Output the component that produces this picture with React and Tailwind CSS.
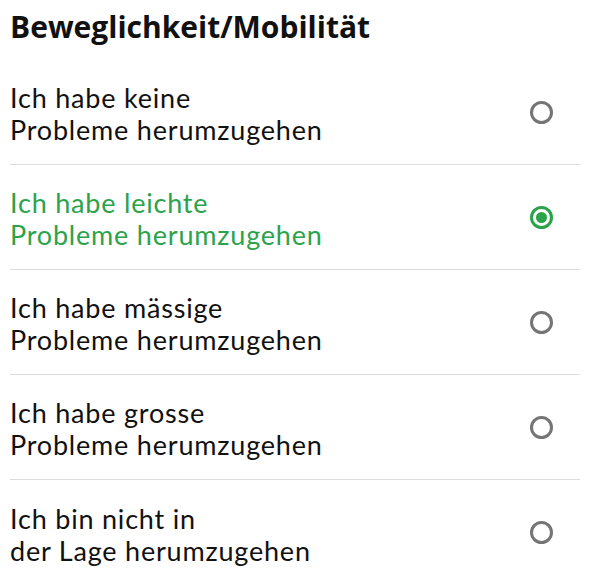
import React, { useState } from 'react';

const options = [
  ['Ich habe keine', 'Probleme herumzugehen'],
  ['Ich habe leichte', 'Probleme herumzugehen'],
  ['Ich habe mässige', 'Probleme herumzugehen'],
  ['Ich habe grosse', 'Probleme herumzugehen'],
  ['Ich bin nicht in', 'der Lage herumzugehen'],
];

function Radio({ checked }) {
  if (checked) {
    return (
      <div className="w-[23px] h-[23px] rounded-full border-[3px] border-[#2ba34a] flex items-center justify-center">
        <div className="w-[11px] h-[11px] rounded-full bg-[#2ba34a]"></div>
      </div>
    );
  }
  return <div className="w-[23px] h-[23px] rounded-full border-[3px] border-[#757575]"></div>;
}

export default function App() {
  const [selected, setSelected] = useState(1);

  return (
    <div className="bg-white w-[593px] h-[582px] overflow-hidden pl-[10px] pr-[13px] font-[Lato,sans-serif]">
      <h1 className="font-['Open_Sans',sans-serif] text-[30px] font-bold text-[#111] leading-none pt-[12px] pb-[18px]">
        Beweglichkeit/Mobilität
      </h1>
      <div>
        {options.map((lines, i) => (
          <div
            key={i}
            onClick={() => setSelected(i)}
            className={`flex items-center justify-between h-[105px] ${i < options.length - 1 ? 'border-b border-[#dcdcdc]' : ''}`}
          >
            <p className={`mt-[4px] text-[27px] font-normal tracking-[0.8px] leading-[32px] ${selected === i ? 'text-[#2ba34a]' : 'text-[#111]'}`}>
              {lines[0]}
              <br />
              {lines[1]}
            </p>
            <div className="mr-[27px]">
              <Radio checked={selected === i} />
            </div>
          </div>
        ))}
      </div>
    </div>
  );
}
